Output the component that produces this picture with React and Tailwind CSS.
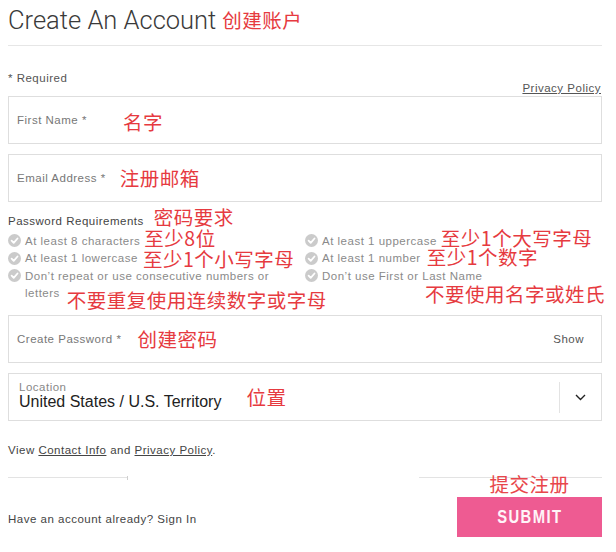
import React from "react";

const SANS = "font-['Liberation_Sans','Noto_Sans_CJK_SC',sans-serif]";
const CJK = "font-['Noto_Sans_CJK_SC',sans-serif] text-[19.5px] text-[#e63a40] whitespace-nowrap";

function Check() {
  return (
    <svg width="13" height="13" viewBox="0 0 13 13" className="shrink-0">
      <circle cx="6.5" cy="6.5" r="6.5" fill="#cbcbcb" />
      <path d="M3.6 6.7 L5.7 8.8 L9.5 4.5" fill="none" stroke="#ffffff" strokeWidth="1.8" strokeLinecap="round" strokeLinejoin="round" />
    </svg>
  );
}

function Req({ text, note, noteClass = "" }) {
  return (
    <div className="flex items-center h-[17.5px] gap-[4px]">
      <Check />
      <span className="text-[#8a8a8a] whitespace-nowrap">{text}</span>
      {note && <span className={`${CJK} leading-[17px] ${noteClass}`}>{note}</span>}
    </div>
  );
}

export default function App() {
  return (
    <div className={`w-[616px] h-[552px] bg-white px-[8px] overflow-hidden ${SANS} text-[11.5px] tracking-[0.5px] leading-[14px] text-[#555]`}>
      {/* Header */}
      <div className="h-[46px] border-b border-[#e6e6e6] pb-[6px] flex items-center gap-[6px] mr-[6px]">
        <h1 className="font-['Roboto','Liberation_Sans',sans-serif] font-light text-[25.5px] leading-[30px] tracking-normal text-[#3a3a3a]">
          Create An Account
        </h1>
        <span className={`${CJK} leading-[24px]`}>创建账户</span>
      </div>

      {/* Required row */}
      <div className="h-[50px] flex items-end justify-between mr-[6px]">
        <span className="mb-[11px] text-[#555]">* Required</span>
        <a className="mb-[1px] mr-[1px] underline text-[#555]">Privacy Policy</a>
      </div>

      {/* First name */}
      <div className="h-[48px] border border-[#dedede] flex items-center px-[8px] mr-[6px]">
        <span className="text-[#777]">First Name *</span>
        <span className={`${CJK} ml-[36px] leading-[20px] translate-y-[2px]`}>名字</span>
      </div>

      {/* Email */}
      <div className="h-[48px] border border-[#dedede] flex items-center px-[8px] mt-[10px] mr-[6px]">
        <span className="text-[#777]">Email Address *</span>
        <span className={`${CJK} ml-[14px] leading-[20px]`}>注册邮箱</span>
      </div>

      {/* Password requirements */}
      <div className="mt-[12px] flex items-center h-[14px] gap-[10px]">
        <span className="text-[#444]">Password Requirements</span>
        <span className={`${CJK} leading-[20px] -translate-y-[4px]`}>密码要求</span>
      </div>

      <div className="mt-[4px] grid grid-cols-[297px_1fr]">
        <div className="flex flex-col">
          <Req text="At least 8 characters" note="至少8位" noteClass="-translate-y-[3px]" />
          <Req text="At least 1 lowercase" note="至少1个小写字母" noteClass="ml-[1px]" />
          <Req text="Don’t repeat or use consecutive numbers or" />
          <div className="flex items-center h-[17.5px] pl-[17px] gap-[7px]">
            <span className="text-[#8a8a8a]">letters</span>
            <span className={`${CJK} leading-[17px] translate-y-[6px]`}>不要重复使用连续数字或字母</span>
          </div>
        </div>
        <div className="flex flex-col">
          <Req text="At least 1 uppercase" note="至少1个大写字母" noteClass="-translate-y-[3px]" />
          <Req text="At least 1 number" note="至少1个数字" noteClass="ml-[2px] -translate-y-[2px]" />
          <Req text="Don’t use First or Last Name" />
          <div className="flex items-center h-[17.5px] pl-[120px]">
            <span className={`${CJK} leading-[17px]`}>不要使用名字或姓氏</span>
          </div>
        </div>
      </div>

      {/* Create password */}
      <div className="h-[48px] border border-[#dedede] flex items-center pl-[8px] pr-[17px] mt-[13px] mr-[6px]">
        <span className="text-[#777]">Create Password *</span>
        <span className={`${CJK} ml-[16px] leading-[20px]`}>创建密码</span>
        <span className="ml-auto text-[#555]">Show</span>
      </div>

      {/* Location */}
      <div className="h-[48px] border border-[#dedede] flex items-center mt-[10px] mr-[6px]">
        <div className="flex-1 flex items-center pl-[10px]">
          <div className="flex flex-col -mt-[2px]">
            <span className="text-[#888] leading-[12px]">Location</span>
            <span className="text-[16px] leading-[18px] tracking-normal text-[#222] whitespace-nowrap">
              United States / U.S. Territory
            </span>
          </div>
          <span className={`${CJK} ml-[25px] leading-[20px]`}>位置</span>
        </div>
        <div className="w-px h-[31px] bg-[#e3e3e3]" />
        <div className="w-[41px] flex justify-center">
          <svg width="11" height="7" viewBox="0 0 11 7">
            <path d="M1 1 L5.5 5.5 L10 1" fill="none" stroke="#222" strokeWidth="1.4" />
          </svg>
        </div>
      </div>

      {/* Contact line */}
      <div className="mt-[22px] text-[#444]">
        View <a className="underline">Contact Info</a> and <a className="underline">Privacy Policy</a>.
      </div>

      {/* Footer */}
      <div className="mt-[20px] flex justify-between items-start mr-[6px]">
        <div className="flex flex-col w-[120px]">
          <div className="flex items-center h-px">
            <div className="flex-1 h-px bg-[#e3e3e3]" />
            <div className="w-px h-[4px] bg-[#cfcfcf]" />
          </div>
          <span className="mt-[34px] whitespace-nowrap text-[#444]">Have an account already? Sign In</span>
        </div>
        <div className="flex flex-col items-end w-[183px]">
          <div className="w-full h-px bg-[#e3e3e3]" />
          <div className="w-[145px] flex flex-col items-center">
            <span className={`${CJK} leading-[20px] -mt-[4px] text-[#e8464b]`}>提交注册</span>
            <button className="mt-[3px] w-[145px] h-[40px] bg-[#ee5b92] flex items-center justify-center">
              <span className="inline-block scale-x-[0.8] text-[#fff4f8] font-['Liberation_Sans',sans-serif] font-bold text-[18.5px] tracking-[1.8px] leading-none">
                SUBMIT
              </span>
            </button>
          </div>
        </div>
      </div>
    </div>
  );
}
